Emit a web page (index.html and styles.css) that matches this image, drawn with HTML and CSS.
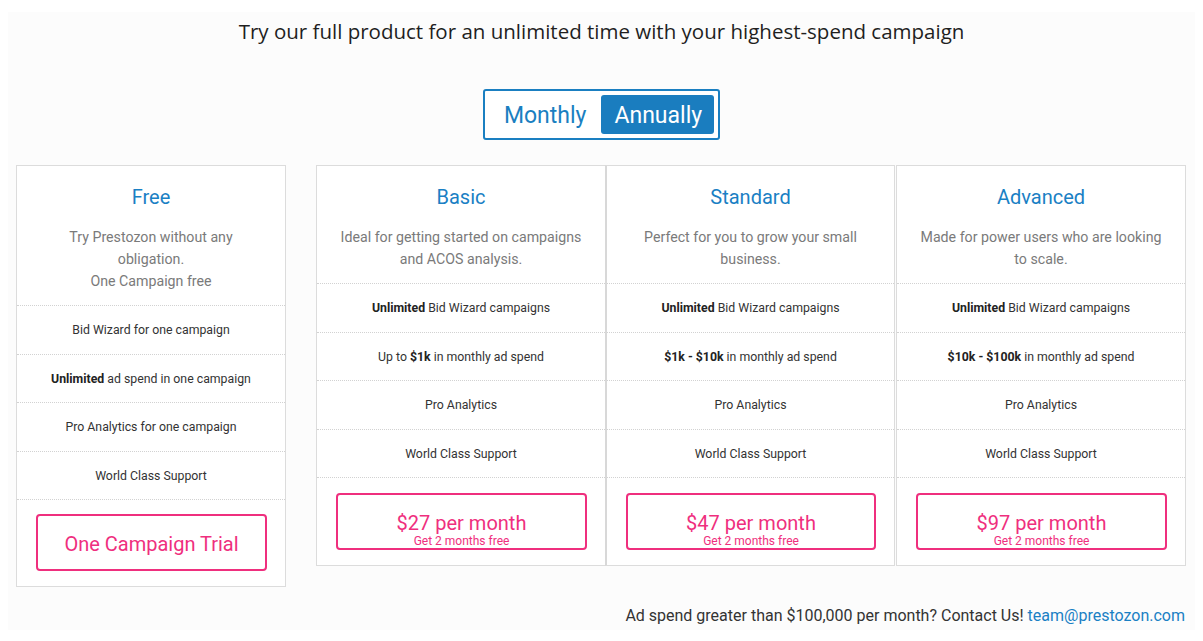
FILE: index.html
```html
<!DOCTYPE html>
<html>
<head>
<meta charset="utf-8">
<link rel="stylesheet" href="styles.css">
</head>
<body>
<div class="page">
  <h1 class="title">Try our full product for an unlimited time with your highest-spend campaign</h1>
  <div class="toggle-wrap">
    <div class="toggle">
      <span class="opt">Monthly</span>
      <span class="opt active">Annually</span>
    </div>
  </div>
  <div class="plans">
    <div class="card free">
      <div class="head">
        <h2 class="name">Free</h2>
        <p class="desc">Try Prestozon without any obligation.<br>One Campaign free</p>
      </div>
      <div class="row">Bid Wizard for one campaign</div>
      <div class="row"><b>Unlimited</b> ad spend in one campaign</div>
      <div class="row">Pro Analytics for one campaign</div>
      <div class="row">World Class Support</div>
      <div class="foot"><div class="btn trial">One Campaign Trial</div></div>
    </div>
    <div class="paid">
      <div class="card c1">
        <div class="head">
          <h2 class="name">Basic</h2>
          <p class="desc">Ideal for getting started on campaigns and ACOS analysis.</p>
        </div>
        <div class="row"><b>Unlimited</b> Bid Wizard campaigns</div>
        <div class="row">Up to <b>$1k</b> in monthly ad spend</div>
        <div class="row">Pro Analytics</div>
        <div class="row">World Class Support</div>
        <div class="foot"><div class="btn price"><span class="amt">$27 per month</span><span class="note">Get 2 months free</span></div></div>
      </div>
      <div class="card c2">
        <div class="head">
          <h2 class="name">Standard</h2>
          <p class="desc">Perfect for you to grow your small business.</p>
        </div>
        <div class="row"><b>Unlimited</b> Bid Wizard campaigns</div>
        <div class="row"><b>$1k - $10k</b> in monthly ad spend</div>
        <div class="row">Pro Analytics</div>
        <div class="row">World Class Support</div>
        <div class="foot"><div class="btn price"><span class="amt">$47 per month</span><span class="note">Get 2 months free</span></div></div>
      </div>
      <div class="card c3">
        <div class="head">
          <h2 class="name">Advanced</h2>
          <p class="desc">Made for power users who are looking to scale.</p>
        </div>
        <div class="row"><b>Unlimited</b> Bid Wizard campaigns</div>
        <div class="row"><b>$10k - $100k</b> in monthly ad spend</div>
        <div class="row">Pro Analytics</div>
        <div class="row">World Class Support</div>
        <div class="foot"><div class="btn price"><span class="amt">$97 per month</span><span class="note">Get 2 months free</span></div></div>
      </div>
    </div>
  </div>
  <p class="contact">Ad spend greater than $100,000 per month? Contact Us! <a class="mail">team@prestozon.com</a></p>
</div>
</body>
</html>
```

FILE: styles.css
```css
html, body {
  margin: 0;
  padding: 0;
  background: #ffffff;
}
body {
  padding: 12px 8px 11px 8px;
  font-family: Roboto, "Liberation Sans", sans-serif;
}
.page {
  background: #fcfcfc;
  padding: 6px 8px 0 8px;
  height: 618px;
  box-sizing: border-box;
}
.title {
  margin: 0;
  font-family: "Open Sans", "Noto Sans", sans-serif;
  font-weight: 400;
  font-size: 20.5px;
  line-height: 26px;
  color: #1f1f1f;
  text-align: center;
}
.toggle-wrap {
  display: flex;
  justify-content: center;
  margin-top: 45px;
}
.toggle {
  display: flex;
  border: 2px solid #1a7fc1;
  border-radius: 3px;
  background: #fff;
  padding: 4px;
}
.opt {
  display: block;
  font-size: 23px;
  line-height: 41px;
  height: 39px;
  padding: 0 15px;
  color: #1a7fc1;
  border-radius: 3px;
  overflow: hidden;
}
.opt.active {
  background: #1a7dbf;
  color: #fff;
  padding: 0 12px 0 13px;
}
.plans {
  display: flex;
  margin-top: 25px;
  align-items: flex-start;
}
.paid {
  display: flex;
  margin-left: 30px;
}
.card {
  background: #fff;
  border: 1px solid #dcdcdc;
  box-sizing: border-box;
  text-align: center;
}
.free { width: 270px; }
.c1 { width: 290px; }
.c2 { width: 290px; margin-left: -1px; border-left: 2px solid #d8d8d8; }
.c3 { width: 290px; margin-left: 1px; }
.head {
  padding: 20px 12px 13px;
}
.name {
  margin: 0;
  font-weight: 400;
  font-size: 20px;
  line-height: 22px;
  color: #1a80c4;
}
.desc {
  margin: 18px 0 0;
  font-size: 14.2px;
  line-height: 22px;
  color: #7a7a7a;
}
.free .desc { padding: 0 34px; }
.c1 .desc { padding: 0 4px; }
.c2 .desc { padding: 0 14px; }
.c3 .desc { padding: 0 9px; }
.row {
  border-top: 1px dotted #d2d2d2;
  height: 48.5px;
  line-height: 49.5px;
  box-sizing: border-box;
  font-size: 12.3px;
  color: #333;
  white-space: nowrap;
  overflow: hidden;
}
.row b { font-weight: 700; color: #222; }
.foot {
  border-top: 1px dotted #d2d2d2;
  padding: 15px 18px 15px 19px;
}
.free .foot {
  padding-top: 14px;
}
.btn {
  border: 2px solid #ef2f7e;
  border-radius: 4px;
  color: #ef2f7e;
  height: 57px;
  box-sizing: border-box;
  display: flex;
  flex-direction: column;
  align-items: center;
}
.trial {
  justify-content: center;
  font-size: 20px;
  padding-top: 3px;
}
.price {
  justify-content: flex-end;
  padding-bottom: 0;
}
.amt {
  font-size: 20px;
  line-height: 22px;
}
.note {
  font-size: 12px;
  line-height: 14px;
}
.contact {
  margin: 20px 2px 0 0;
  text-align: right;
  font-size: 16px;
  line-height: 18px;
  color: #333;
}
.mail {
  color: #1a80c4;
  text-decoration: none;
}
```
